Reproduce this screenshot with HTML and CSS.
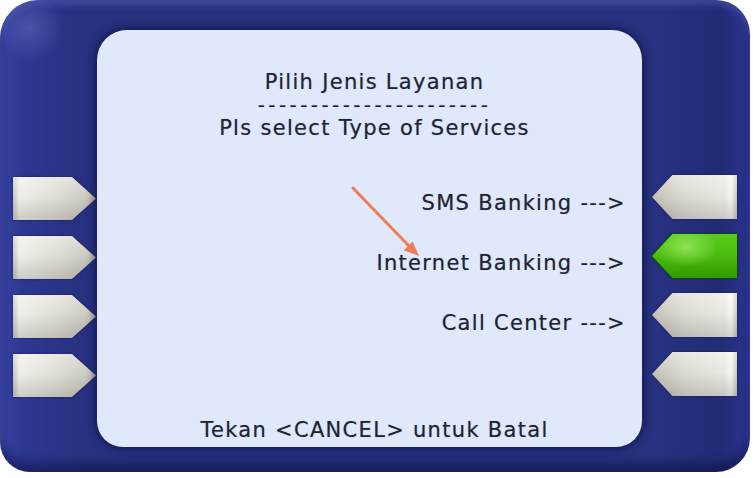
FILE: index.html
```html
<!DOCTYPE html>
<html lang="id">
<head>
<meta charset="utf-8">
<title>Pilih Jenis Layanan</title>
<link rel="stylesheet" href="styles.css">
</head>
<body>
<div class="atm">
  <div class="keys keys-left">
    <div class="key key-l"><span class="face"></span></div>
    <div class="key key-l"><span class="face"></span></div>
    <div class="key key-l"><span class="face"></span></div>
    <div class="key key-l"><span class="face"></span></div>
  </div>
  <div class="screen">
    <div class="title">
      <div class="line">Pilih Jenis Layanan</div>
      <div class="line dashes">----------------------</div>
      <div class="line">Pls select Type of Services</div>
    </div>
    <div class="options">
      <div class="opt">SMS Banking ---&gt;</div>
      <div class="opt">Internet Banking ---&gt;</div>
      <div class="opt">Call Center ---&gt;</div>
    </div>
    <div class="footer">Tekan &lt;CANCEL&gt; untuk Batal</div>
    <svg class="pointer" width="80" height="85" viewBox="0 0 80 85" aria-hidden="true">
      <line x1="6" y1="8" x2="61" y2="65" stroke="#f07d55" stroke-width="3" stroke-linecap="round"/>
      <polygon points="72,76 56.6,70.2 65.6,61.4" fill="#f07d55"/>
    </svg>
  </div>
  <div class="keys keys-right">
    <div class="key key-r"><span class="face"></span></div>
    <div class="key key-r active"><span class="face"></span></div>
    <div class="key key-r"><span class="face"></span></div>
    <div class="key key-r"><span class="face"></span></div>
  </div>
</div>
</body>
</html>
```
FILE: styles.css
```css
html, body {
  margin: 0;
  padding: 0;
  background: #ffffff;
}

.atm {
  width: 750px;
  height: 472px;
  box-sizing: border-box;
  padding-top: 30px;
  display: grid;
  grid-template-columns: 97px 545px 1fr;
  grid-template-rows: 417px;
  border-radius: 38px 34px 34px 30px;
  background:
    radial-gradient(circle at 30px 28px, rgba(150, 160, 225, 0.28), rgba(150, 160, 225, 0) 34px),
    linear-gradient(to right, #3743a3 0, #2c3791 3%, #27317f 11%, #27317f 88%, #222b75 96%, #2a3490 100%);
  box-shadow:
    inset 0 5px 6px rgba(120, 130, 215, 0.3),
    inset 0 -9px 10px rgba(8, 12, 55, 0.45);
}

.keys {
  display: flex;
  flex-direction: column;
}

.keys-left {
  padding-left: 13px;
  padding-top: 147px;
  gap: 16px;
}

.keys-right {
  padding-left: 10px;
  padding-top: 145px;
  gap: 15px;
}

.key {
  display: block;
  filter: drop-shadow(0 0 1px rgba(20, 25, 70, 0.9));
}

.key-l {
  width: 83px;
  height: 43px;
}

.key-r {
  width: 85px;
  height: 44px;
}

.face {
  display: block;
  width: 100%;
  height: 100%;
}

.key-l .face {
  clip-path: polygon(0 0, 71% 0, 100% 50%, 71% 100%, 0 100%);
  background:
    linear-gradient(to bottom, rgba(255, 255, 255, 0.35) 0, rgba(255, 255, 255, 0) 45%, rgba(0, 0, 0, 0.14) 100%),
    linear-gradient(to right, #c9c7bf 0, #efeee8 8%, #dedcd3 55%, #c6c4ba 100%);
}

.key-r .face {
  clip-path: polygon(0 50%, 24% 0, 100% 0, 100% 100%, 24% 100%);
  background:
    linear-gradient(to bottom, rgba(255, 255, 255, 0.35) 0, rgba(255, 255, 255, 0) 45%, rgba(0, 0, 0, 0.14) 100%),
    linear-gradient(to right, #c4c2b8 0, #dedcd3 40%, #e9e8e2 85%, #f6f6f2 93%, #c9c7bf 100%);
}

.key-r.active {
  filter: drop-shadow(0 0 1px #14400a) drop-shadow(0 0 1px #14400a);
}

.key-r.active .face {
  background:
    radial-gradient(ellipse at 40% 30%, rgba(190, 255, 140, 0.55), rgba(190, 255, 140, 0) 45%),
    linear-gradient(to bottom, #5ccc1c 0, #48b80a 55%, #2f9a00 100%);
}

.screen {
  position: relative;
  display: flex;
  flex-direction: column;
  box-sizing: border-box;
  padding: 41px 16px 5px 26px;
  background: #e0e9fb;
  border-radius: 30px 30px 26px 26px;
  box-shadow: 0 0 8px 2px rgba(10, 14, 55, 0.65);
  font-family: "DejaVu Sans", Verdana, sans-serif;
  font-size: 21px;
  letter-spacing: 1.3px;
  color: #1f2431;
  text-shadow: 0 0 1px rgba(30, 35, 50, 0.4);
}

.title {
  text-align: center;
}

.line {
  line-height: 23px;
  white-space: nowrap;
}

.dashes {
  font-size: 20px;
  letter-spacing: 3.4px;
}

.options {
  margin-top: 51px;
  display: flex;
  flex-direction: column;
  align-items: flex-end;
  gap: 36px;
}

.opt {
  line-height: 24px;
  white-space: nowrap;
}

.footer {
  margin-top: auto;
  line-height: 24px;
  text-align: center;
  white-space: nowrap;
}

.pointer {
  position: absolute;
  left: 250px;
  top: 150px;
}
```
